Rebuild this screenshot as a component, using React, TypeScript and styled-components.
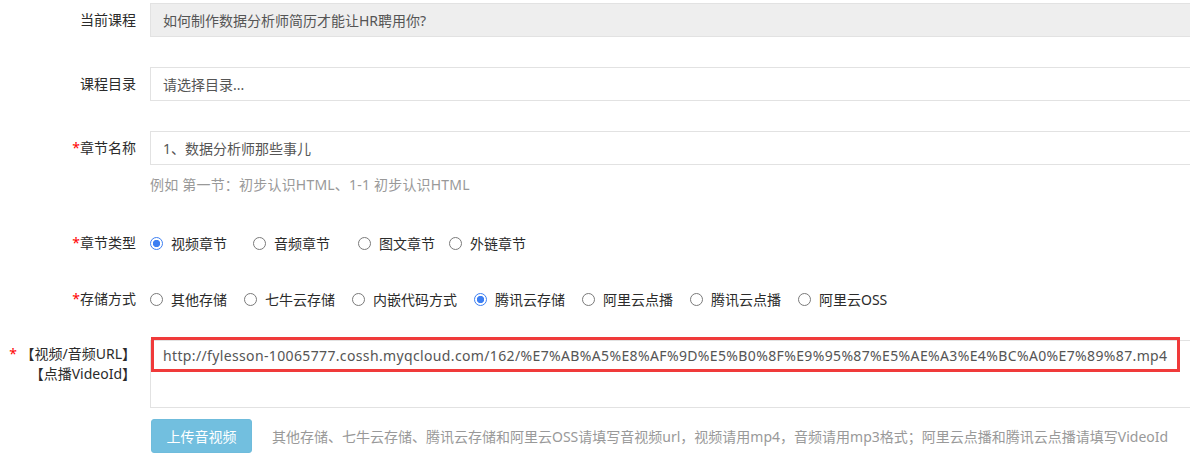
import React from "react";
import styled, { createGlobalStyle } from "styled-components";

const Global = createGlobalStyle`
  html, body {
    margin: 0;
    padding: 0;
    background: #fff;
    overflow: hidden;
  }
  body {
    font-family: "Noto Sans", "Noto Sans CJK SC", sans-serif;
    font-size: 14px;
    color: #333;
  }
  * { box-sizing: border-box; }
`;

const Form = styled.form`
  display: grid;
  grid-template-columns: 136px 1100px;
  column-gap: 14px;
  padding-top: 3px;
  width: 1250px;
`;

const Label = styled.label<{ $top?: boolean }>`
  text-align: right;
  line-height: ${(p) => (p.$top ? "20px" : "34px")};
  padding-top: ${(p) => (p.$top ? "7px" : "0")};
  color: #2b2b2b;
  white-space: nowrap;
`;

const Star = styled.span`
  color: #f00;
`;

const Cell = styled.div<{ $mb?: number }>`
  margin-bottom: ${(p) => p.$mb ?? 0}px;
`;

const Input = styled.input<{ $readOnlyBg?: boolean }>`
  display: block;
  width: 100%;
  height: 34px;
  padding: 6px 12px;
  border: 1px solid #e2e2e2;
  background: ${(p) => (p.$readOnlyBg ? "#eeeeee" : "#fff")};
  color: #555;
  font: inherit;
  font-size: 14px;
  outline: none;
`;

const Help = styled.div`
  color: #999;
  line-height: 20px;
  margin-top: 10px;
  letter-spacing: 0.2px;
`;

const RadioGroup = styled.div`
  display: flex;
  align-items: center;
  height: 34px;
`;

const RadioItem = styled.label<{ $space: number }>`
  display: flex;
  align-items: center;
  margin-right: ${(p) => p.$space}px;
  color: #2b2b2b;
  white-space: nowrap;
`;

const Dot = styled.span<{ $on?: boolean }>`
  width: 13px;
  height: 13px;
  border-radius: 50%;
  margin-right: 8px;
  flex: none;
  border: ${(p) => (p.$on ? "1.5px solid #3d7ff2" : "1px solid #7a7a7a")};
  background: ${(p) =>
    p.$on
      ? "radial-gradient(circle, #3d7ff2 0 3.4px, #fff 3.9px 100%)"
      : "#fff"};
`;

const AreaWrap = styled.div`
  position: relative;
  margin-top: 3px;
`;

const TextArea = styled.textarea`
  display: block;
  width: 100%;
  height: 68px;
  padding: 5px 12px;
  border: 1px solid #e2e2e2;
  color: #555;
  font: inherit;
  font-size: 14px;
  line-height: 20px;
  letter-spacing: 0.36px;
  resize: none;
  outline: none;
  white-space: nowrap;
  overflow: hidden;
`;

const Highlight = styled.div`
  position: absolute;
  left: 1px;
  top: -3px;
  width: 1029px;
  height: 35px;
  border: 3px solid #f03a3a;
  pointer-events: none;
`;

const UploadRow = styled.div`
  display: flex;
  align-items: center;
  gap: 20px;
  margin-top: 11px;
`;

const Button = styled.button`
  width: 101px;
  height: 34px;
  border: 1px solid #6fbcdc;
  border-radius: 3px;
  background: #72bfdf;
  color: #fff;
  font: inherit;
  font-size: 14px;
  margin-left: 1px;
`;

const Note = styled.span`
  color: #999;
  white-space: nowrap;
`;

const types = [
  { t: "视频章节", on: true, s: 26 },
  { t: "音频章节", s: 28 },
  { t: "图文章节", s: 14 },
  { t: "外链章节", s: 0 },
];

const stores = [
  "其他存储",
  "七牛云存储",
  "内嵌代码方式",
  "腾讯云存储",
  "阿里云点播",
  "腾讯云点播",
  "阿里云OSS",
];

const url =
  "http://fylesson-10065777.cossh.myqcloud.com/162/%E7%AB%A5%E8%AF%9D%E5%B0%8F%E9%95%87%E5%AE%A3%E4%BC%A0%E7%89%87.mp4";

export default function App() {
  return (
    <>
      <Global />
      <Form onSubmit={(e) => e.preventDefault()}>
        <Label>当前课程</Label>
        <Cell $mb={30}>
          <Input $readOnlyBg readOnly value="如何制作数据分析师简历才能让HR聘用你?" />
        </Cell>

        <Label>课程目录</Label>
        <Cell $mb={30}>
          <Input readOnly value="请选择目录..." />
        </Cell>

        <Label>
          <Star>*</Star>章节名称
        </Label>
        <Cell $mb={31}>
          <Input readOnly value="1、数据分析师那些事儿" />
          <Help>例如 第一节：初步认识HTML、1-1 初步认识HTML</Help>
        </Cell>

        <Label>
          <Star>*</Star>章节类型
        </Label>
        <Cell $mb={22}>
          <RadioGroup>
            {types.map((r) => (
              <RadioItem key={r.t} $space={r.s}>
                <Dot $on={r.on} />
                {r.t}
              </RadioItem>
            ))}
          </RadioGroup>
        </Cell>

        <Label>
          <Star>*</Star>存储方式
        </Label>
        <Cell $mb={21}>
          <RadioGroup>
            {stores.map((t) => (
              <RadioItem key={t} $space={17}>
                <Dot $on={t === "腾讯云存储"} />
                {t}
              </RadioItem>
            ))}
          </RadioGroup>
        </Cell>

        <Label $top>
          <Star>* </Star>【视频/音频URL】
          <br />
          【点播VideoId】
        </Label>
        <Cell>
          <AreaWrap>
            <TextArea readOnly value={url} />
            <Highlight />
          </AreaWrap>
          <UploadRow>
            <Button type="button">上传音视频</Button>
            <Note>
              其他存储、七牛云存储、腾讯云存储和阿里云OSS请填写音视频url，视频请用mp4，音频请用mp3格式；阿里云点播和腾讯云点播请填写VideoId
            </Note>
          </UploadRow>
        </Cell>
      </Form>
    </>
  );
}
